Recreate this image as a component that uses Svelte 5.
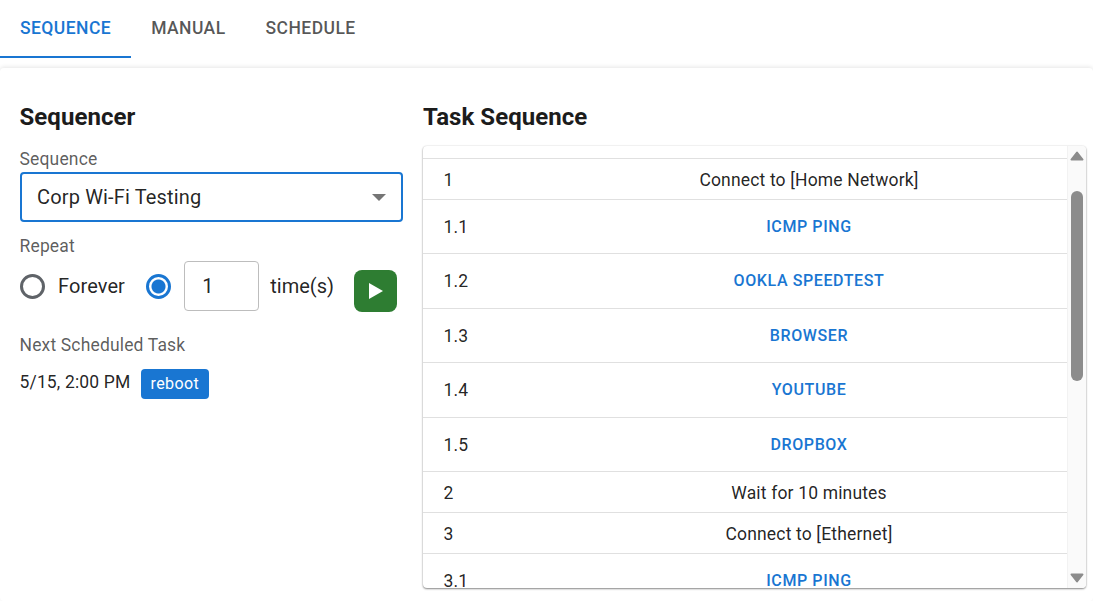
<script>
    const tabs = ["SEQUENCE", "MANUAL", "SCHEDULE"];
    const rows = [
        { num: "1", text: "Connect to [Home Network]" },
        { num: "1.1", test: "ICMP PING" },
        { num: "1.2", test: "OOKLA SPEEDTEST" },
        { num: "1.3", test: "BROWSER" },
        { num: "1.4", test: "YOUTUBE" },
        { num: "1.5", test: "DROPBOX" },
        { num: "2", text: "Wait for 10 minutes" },
        { num: "3", text: "Connect to [Ethernet]" },
        { num: "3.1", test: "ICMP PING" },
    ];
</script>

<div class="page">
    <div class="tabs">
        {#each tabs as tab, i}
            <button class="tab" class:active={i === 0}>{tab}</button>
        {/each}
    </div>

    <div class="panel">
        <div class="left">
            <h2>Sequencer</h2>
            <div class="label">Sequence</div>
            <div class="select">
                <span>Corp Wi-Fi Testing</span>
                <span class="caret"></span>
            </div>
            <div class="label repeat-label">Repeat</div>
            <div class="repeat">
                <span class="radio"></span>
                <span class="radio-text">Forever</span>
                <span class="radio checked"></span>
                <div class="count">1</div>
                <span>time(s)</span>
                <button class="play" aria-label="Run">
                    <svg width="14" height="16" viewBox="0 0 14 16"><path d="M0 0 L14 8 L0 16 Z" fill="#fff" /></svg>
                </button>
            </div>
            <div class="label next-label">Next Scheduled Task</div>
            <div class="next">
                <span class="date">5/15, 2:00 PM</span>
                <span class="chip">reboot</span>
            </div>
        </div>

        <div class="right">
            <h2>Task Sequence</h2>
            <div class="table">
                <div class="rows">
                    <div class="spacer"></div>
                    {#each rows as row}
                        <div class="row" class:tall={row.test}>
                            <div class="num">{row.num}</div>
                            {#if row.test}
                                <div class="cell test">{row.test}</div>
                            {:else}
                                <div class="cell">{row.text}</div>
                            {/if}
                        </div>
                    {/each}
                </div>
                <div class="rail">
                    <svg class="arrow up" width="14" height="10" viewBox="0 0 14 10">
                        <path d="M7 1.5 L12.5 8.5 L1.5 8.5 Z" fill="#8c8c8c" stroke="#8c8c8c" stroke-width="2" stroke-linejoin="round" />
                    </svg>
                    <div class="thumb"></div>
                    <svg class="arrow down" width="14" height="10" viewBox="0 0 14 10">
                        <path d="M7 8.5 L12.5 1.5 L1.5 1.5 Z" fill="#8c8c8c" stroke="#8c8c8c" stroke-width="2" stroke-linejoin="round" />
                    </svg>
                </div>
            </div>
        </div>
    </div>
</div>

<style>
    :global(body) {
        margin: 0;
        background: #fff;
    }

    .page {
        width: 1093px;
        height: 601px;
        overflow: hidden;
        background: #fff;
        font-family: Roboto, sans-serif;
        font-size: 17.5px;
        letter-spacing: 0.16px;
        color: rgba(0, 0, 0, 0.87);
    }

    .tabs {
        display: flex;
        height: 58px;
        margin-bottom: 10px;
    }
    .tab {
        height: 58px;
        padding: 0 20px 1px;
        border: none;
        border-bottom: 2px solid transparent;
        background: none;
        font-family: inherit;
        font-size: 17.5px;
        font-weight: 500;
        letter-spacing: 0.44px;
        color: rgba(0, 0, 0, 0.67);
    }
    .tab.active {
        color: #1976d2;
        border-bottom-color: #1976d2;
    }

    .panel {
        display: flex;
        height: 533px;
        padding: 0 7px 0 19.5px;
        border-radius: 4px;
        box-shadow: 0 -1px 4px rgba(0, 0, 0, 0.1);
    }

    h2 {
        margin: 0;
        font-size: 24px;
        font-weight: 700;
        line-height: 32px;
        letter-spacing: 0.05px;
        color: #1c1c1c;
    }

    .left {
        width: 383px;
        margin-right: 20.5px;
        padding-top: 33px;
    }
    .label {
        color: rgba(0, 0, 0, 0.65);
        line-height: 20px;
    }
    .left h2 {
        margin-bottom: 16px;
    }
    .select {
        display: flex;
        align-items: center;
        justify-content: space-between;
        box-sizing: border-box;
        height: 50px;
        margin-top: 3px;
        padding: 0 15px 0 15.5px;
        border: 2px solid #1976d2;
        border-radius: 4px;
        font-size: 20px;
        letter-spacing: 0.15px;
    }
    .caret {
        width: 0;
        height: 0;
        border: 7px solid transparent;
        border-top: 7px solid #757575;
        border-bottom: none;
    }
    .repeat-label {
        margin-top: 14px;
    }
    .repeat {
        display: flex;
        align-items: center;
        margin-top: 5px;
        font-size: 20px;
        letter-spacing: 0;
    }
    .radio {
        box-sizing: border-box;
        flex: none;
        width: 25px;
        height: 25px;
        border: 3px solid #5f6368;
        border-radius: 50%;
    }
    .radio-text {
        margin: 0 21.3px 0 13.5px;
        letter-spacing: 0.1px;
    }
    .radio.checked {
        border-color: #1976d2;
        background: radial-gradient(circle, #1976d2 0 6.5px, transparent 7.5px);
    }
    .count {
        box-sizing: border-box;
        width: 75px;
        height: 50px;
        margin: 0 11px 0 13px;
        padding: 0 17px;
        border: 1px solid #bdbdbd;
        border-radius: 4px;
        line-height: 48px;
    }
    .play {
        display: flex;
        align-items: center;
        justify-content: center;
        align-self: flex-start;
        width: 43px;
        height: 42px;
        margin: 9px 0 -1px 20.5px;
        padding: 0;
        border: none;
        border-radius: 8px;
        background: #2e7d32;
    }
    .next-label {
        margin-top: 24px;
    }
    .next {
        display: flex;
        align-items: flex-start;
        gap: 10px;
        margin-top: 12px;
    }
    .date {
        margin-top: 5px;
    }
    .chip {
        margin-top: 2px;
        padding: 0 10px;
        height: 30px;
        line-height: 29px;
        border-radius: 4px;
        background: #1976d2;
        color: #fff;
        font-size: 16px;
        font-weight: 400;
        letter-spacing: 0.4px;
    }

    .right {
        flex: 1;
        padding-top: 33px;
    }
    .right h2 {
        margin-bottom: 13px;
    }
    .table {
        display: flex;
        height: 442px;
        margin-left: -0.5px;
        border-radius: 4px;
        overflow: hidden;
        box-shadow: 0 1px 2px rgba(0, 0, 0, 0.45), 0 0 2px rgba(0, 0, 0, 0.12);
    }
    .rows {
        flex: 1;
        min-width: 0;
        overflow: hidden;
    }
    .spacer {
        height: 11.5px;
        border-bottom: 1px solid #e0e0e0;
    }
    .row {
        display: flex;
        align-items: center;
        box-sizing: border-box;
        height: 41px;
        padding-top: 2px;
        border-bottom: 1px solid #e0e0e0;
    }
    .row.tall {
        height: 54.5px;
        padding-top: 0;
    }
    .num {
        width: 128.5px;
        box-sizing: border-box;
        padding-left: 21px;
    }
    .tall .num {
        padding-top: 1px;
    }
    .cell {
        flex: 1;
        text-align: center;
    }
    .test {
        color: #1976d2;
        font-size: 16px;
        font-weight: 500;
        letter-spacing: 0.6px;
    }
    .rail {
        position: relative;
        flex: none;
        width: 19px;
        background: #fafafa;
        border-left: 1px solid #f2f2f2;
        box-sizing: border-box;
    }
    .thumb {
        position: absolute;
        left: 3px;
        top: 45px;
        width: 12px;
        height: 190px;
        border-radius: 6px;
        background: #8c8c8c;
    }
    .arrow {
        position: absolute;
        left: 2px;
    }
    .arrow.up {
        top: 5px;
    }
    .arrow.down {
        bottom: 5px;
    }
</style>
